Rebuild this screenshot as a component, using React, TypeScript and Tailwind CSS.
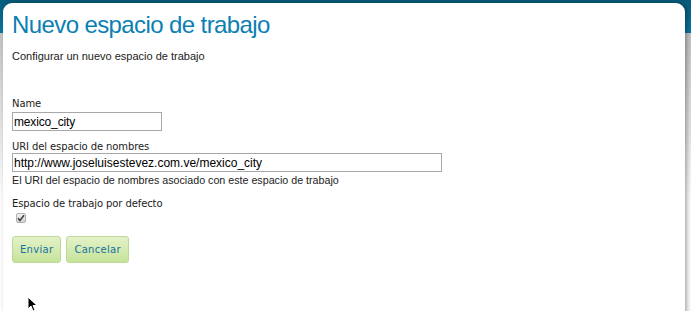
export default function App() {
  return (
    <div className="w-[691px] h-[311px] overflow-hidden pt-[3px] pl-[3px] pr-[6px] bg-[linear-gradient(to_bottom,#065b7b_0px,#0a76a3_33px,#c4c4c4_33px,#ffffff_200px)] font-['Liberation_Sans',Arial,sans-serif]">
      <div className="relative h-[320px] bg-white rounded-t-[9px] shadow-[2px_0_5px_rgba(0,0,0,0.35)] pl-[9px] pt-[7px]">
        {/* Header */}
        <h1 className="text-[24px] leading-[30px] text-[#0b7fb4] tracking-[-0.6px]">Nuevo espacio de trabajo</h1>
        <p className="mt-[10px] text-[11px] leading-[13px] text-[#222]">Configurar un nuevo espacio de trabajo</p>

        {/* Form */}
        <div className="mt-[35px] font-['DejaVu_Sans',Verdana,sans-serif] text-[10px] text-[#222]">
          <label className="block leading-[12px] tracking-[-0.1px]">Name</label>
          <input
            readOnly
            value="mexico_city"
            className="mt-[2px] block w-[150px] h-[19px] border border-[#a8a8a8] px-[1px] text-[12px] tracking-[-0.15px] text-black font-['Liberation_Sans',Arial,sans-serif] outline-none"
          />

          <label className="block mt-[10px] leading-[12px] tracking-[-0.1px]">URI del espacio de nombres</label>
          <input
            readOnly
            value="http://www.joseluisestevez.com.ve/mexico_city"
            className="block w-[430px] h-[19px] border border-[#a8a8a8] px-[1px] text-[12px] text-black font-['Liberation_Sans',Arial,sans-serif] outline-none"
          />
          <p className="mt-[1px] font-['Liberation_Sans',Arial,sans-serif] text-[10.7px] leading-[14px] text-[#222]">
            El URI del espacio de nombres asociado con este espacio de trabajo
          </p>

          <label className="block mt-[11px] leading-[12px] tracking-[-0.1px]">Espacio de trabajo por defecto</label>
          <div className="mt-[3px] ml-[4px] w-[10px] h-[10px] rounded-[2px] border border-[#b0b0b0] bg-[linear-gradient(#f0f0f0,#d4d4d4)] flex items-center justify-center">
            <svg width="8" height="8" viewBox="0 0 8 8">
              <path d="M1 4.2 L3 6.4 L7 1.2" fill="none" stroke="#444" strokeWidth="1.6" />
            </svg>
          </div>

          <div className="mt-[13px] flex gap-[5px]">
            <button className="h-[27px] px-[7px] rounded-[3px] border border-[#bcd99a] bg-[linear-gradient(#e4f2c8,#c6e39a)] text-[#1572a0] text-[10px] tracking-[0.3px]">
              Enviar
            </button>
            <button className="h-[27px] px-[7px] rounded-[3px] border border-[#bcd99a] bg-[linear-gradient(#e4f2c8,#c6e39a)] text-[#1572a0] text-[10px] tracking-[0.3px]">
              Cancelar
            </button>
          </div>
        </div>

        {/* Mouse cursor */}
        <svg className="absolute left-[24px] top-[293px]" width="12" height="16" viewBox="0 0 12 16">
          <path d="M1 1 L1 13 L4 10 L6 15 L8 14 L6 9.5 L10 9.5 Z" fill="#000" stroke="#fff" strokeWidth="1" />
        </svg>
      </div>
    </div>
  );
}
